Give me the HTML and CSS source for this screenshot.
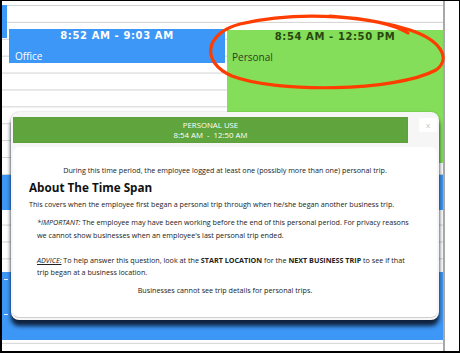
FILE: index.html
```html
<!DOCTYPE html>
<html>
<head>
<meta charset="utf-8">
<link rel="stylesheet" href="styles.css">
</head>
<body>
<div class="frame">
  <div class="calendar">
    <div class="event ev-stub"></div>
    <div class="event ev-office">
      <div class="ev-title">8:52 AM - 9:03 AM</div>
      <div class="ev-label">Office</div>
    </div>
    <div class="event ev-personal">
      <div class="ev-title">8:54 AM - 12:50 PM</div>
      <div class="ev-label">Personal</div>
    </div>
    <div class="event ev-mid"></div>
    <div class="event ev-low"><span class="dash"></span><span class="dash dash2"></span></div>
  </div>
  <svg class="annotation" viewBox="0 0 460 353" width="460" height="353">
    <path d="M 408 33 C 380 16, 300 10, 240 24 C 205 33, 200 62, 232 76 C 275 93, 395 92, 436 70 C 452 58, 440 40, 410 30 C 385 22, 360 18, 330 16" fill="none" stroke="#ff3d00" stroke-width="3.2" stroke-linecap="round"/>
  </svg>
  <div class="modal">
    <div class="modal-top">
      <div class="modal-header">
        <div>PERSONAL USE</div>
        <div>8:54 AM &nbsp;-&nbsp; 12:50 AM</div>
      </div>
      <div class="modal-close">x</div>
    </div>
    <div class="modal-body">
      <p class="intro">During this time period, the employee logged at least one (possibly more than one) personal trip.</p>
      <h2 class="heading">About The Time Span</h2>
      <p class="para">This covers when the employee first began a personal trip through when he/she began another business trip.</p>
      <div class="note">
        <p class="note-important"><em>*IMPORTANT:</em> The employee may have been working before the end of this personal period. For privacy reasons<br>we cannot show businesses when an employee's last personal trip ended.</p>
        <p class="note-advice"><em class="u">ADVICE:</em> To help answer this question, look at the <b>START LOCATION</b> for the <b>NEXT BUSINESS TRIP</b> to see if that<br>trip began at a business location.</p>
      </div>
      <p class="outro">Businesses cannot see trip details for personal trips.</p>
    </div>
  </div>
</div>
</body>
</html>
```
FILE: styles.css
```css
html, body {
  margin: 0;
  padding: 0;
  background: #fff;
}

.frame {
  position: relative;
  width: 460px;
  height: 353px;
  box-sizing: border-box;
  border-style: solid;
  border-color: #000;
  border-width: 1px 1px 2px 2px;
  background: #fff;
  overflow: hidden;
  font-family: "Open Sans", "Liberation Sans", sans-serif;
}

.calendar {
  position: relative;
  width: 441px;
  height: 350px;
  border-right: 2px solid #a8a8a8;
  background-image: linear-gradient(to bottom, #d2d2d2 0, #d2d2d2 1px, transparent 1px);
  background-size: 100% 16.9px;
  background-position: 0 4px;
}

.event {
  position: absolute;
  box-sizing: border-box;
}

.ev-stub {
  left: 0;
  top: 4px;
  width: 5px;
  height: 33px;
  background: #3d97f6;
}

.ev-office {
  left: 7px;
  top: 28px;
  width: 216px;
  height: 34px;
  background: #3d97f6;
  color: #fff;
  padding: 1px 6px 0;
}

.ev-personal {
  left: 225px;
  top: 29px;
  width: 216px;
  height: 133px;
  background: #84de59;
  color: #2f3d24;
  padding: 1px 5px 0;
}

.ev-title {
  font-family: "DejaVu Sans", sans-serif;
  font-weight: bold;
  font-size: 10px;
  line-height: 12px;
  letter-spacing: 0.6px;
  text-align: center;
}

.ev-personal .ev-title {
  color: #27480f;
}

.ev-label {
  font-size: 10px;
  line-height: 12px;
  margin-top: 8px;
}

.ev-mid {
  left: 0;
  top: 174px;
  width: 441px;
  height: 35px;
  background: #3d97f6;
}

.ev-low {
  left: 0;
  top: 271px;
  width: 441px;
  height: 68px;
  background: #3d97f6;
  display: flex;
  flex-direction: column;
  padding: 7px 0 0 2px;
  gap: 34px;
}

.dash {
  display: block;
  width: 4px;
  height: 1px;
  background: #e8f2ff;
}

.annotation {
  position: absolute;
  left: -2px;
  top: -1px;
  pointer-events: none;
}

.modal {
  position: absolute;
  left: 9px;
  top: 111px;
  width: 428px;
  height: 208px;
  box-sizing: border-box;
  padding: 5px 2px 2px 2px;
  background: #f6f6f6;
  border-radius: 8px;
  box-shadow: 0 6px 4px rgba(10, 22, 42, 0.9), 0 0 2px rgba(0, 0, 0, 0.25);
  display: flex;
  flex-direction: column;
  gap: 4px;
}

.modal-top {
  display: flex;
  align-items: flex-start;
}

.modal-header {
  width: 395px;
  height: 26px;
  box-sizing: border-box;
  padding-top: 2px;
  background-color: #6bb446;
  background-image: radial-gradient(circle, rgba(40, 90, 20, 0.35) 0.5px, transparent 0.9px);
  background-size: 2px 2px;
  border: 1px solid #5f9f3c;
  color: #fff;
  font-size: 7.8px;
  line-height: 10px;
  text-align: center;
}

.modal-close {
  margin-left: auto;
  margin-top: 1px;
  width: 18px;
  height: 14px;
  background: #fff;
  border-radius: 2px;
  color: #c4c4c4;
  font-size: 8px;
  line-height: 13px;
  text-align: center;
}

.modal-body {
  flex: 1;
  background: #fff;
  border-radius: 6px;
  border-bottom: 1px solid #cfcfcf;
  padding: 17px 16px 0 16px;
  color: #222;
  font-size: 7.2px;
}

.modal-body p {
  margin: 0;
}

.intro {
  line-height: 12px;
  text-align: center;
}

.heading {
  margin: 4px 0 0;
  font-size: 11.7px;
  line-height: 14px;
  font-weight: bold;
  color: #111;
}

.para {
  margin-top: 4px !important;
  line-height: 12px;
}

.note {
  padding-left: 8px;
}

.note-important {
  margin-top: 6px !important;
  line-height: 13px;
}

.note-advice {
  margin-top: 12px !important;
  line-height: 12px;
}

.u {
  text-decoration: underline;
}

.outro {
  margin-top: 6px !important;
  line-height: 12px;
  text-align: center;
}
```
